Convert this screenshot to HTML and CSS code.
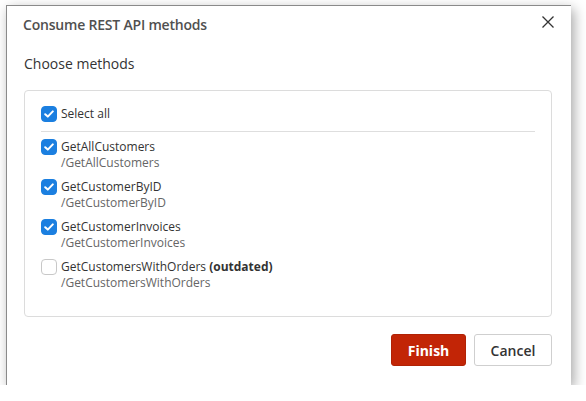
FILE: index.html
```html
<!DOCTYPE html>
<html>
<head>
<meta charset="utf-8">
<link rel="stylesheet" href="styles.css">
</head>
<body>
<div class="dialog">
  <div class="header">
    <h1 class="title">Consume REST API methods</h1>
    <button class="close" aria-label="Close">
      <svg width="12" height="12" viewBox="0 0 12 12"><path d="M0.5 0.5 L11.5 11.5 M11.5 0.5 L0.5 11.5" stroke="#333" stroke-width="1.3" fill="none"/></svg>
    </button>
  </div>
  <div class="body">
    <div class="subtitle">Choose methods</div>
    <div class="box">
      <label class="row all">
        <span class="cb checked"><svg width="10" height="8" viewBox="0 0 10 8"><path d="M1.2 4.2 L3.8 6.6 L8.8 1.4" stroke="#fff" stroke-width="2" fill="none" stroke-linecap="round" stroke-linejoin="round"/></svg></span>
        <span class="name">Select all</span>
      </label>
      <div class="divider"></div>
      <label class="row">
        <span class="cb checked"><svg width="10" height="8" viewBox="0 0 10 8"><path d="M1.2 4.2 L3.8 6.6 L8.8 1.4" stroke="#fff" stroke-width="2" fill="none" stroke-linecap="round" stroke-linejoin="round"/></svg></span>
        <span class="text"><span class="name">GetAllCustomers</span><span class="path">/GetAllCustomers</span></span>
      </label>
      <label class="row">
        <span class="cb checked"><svg width="10" height="8" viewBox="0 0 10 8"><path d="M1.2 4.2 L3.8 6.6 L8.8 1.4" stroke="#fff" stroke-width="2" fill="none" stroke-linecap="round" stroke-linejoin="round"/></svg></span>
        <span class="text"><span class="name">GetCustomerByID</span><span class="path">/GetCustomerByID</span></span>
      </label>
      <label class="row">
        <span class="cb checked"><svg width="10" height="8" viewBox="0 0 10 8"><path d="M1.2 4.2 L3.8 6.6 L8.8 1.4" stroke="#fff" stroke-width="2" fill="none" stroke-linecap="round" stroke-linejoin="round"/></svg></span>
        <span class="text"><span class="name">GetCustomerInvoices</span><span class="path">/GetCustomerInvoices</span></span>
      </label>
      <label class="row">
        <span class="cb"></span>
        <span class="text"><span class="name">GetCustomersWithOrders <b>(outdated)</b></span><span class="path">/GetCustomersWithOrders</span></span>
      </label>
    </div>
  </div>
  <div class="footer">
    <button class="btn primary">Finish</button>
    <button class="btn secondary">Cancel</button>
  </div>
</div>
</body>
</html>
```
FILE: styles.css
```css
* { box-sizing: border-box; }
html, body { margin: 0; padding: 0; background: #fff; }
body {
  font-family: "Open Sans", "Noto Sans", sans-serif;
  color: #333;
  padding: 5px 0 0 6px;
}
.dialog {
  width: 565px;
  height: 380px;
  background: #fff;
  border-top: 1px solid #8a8a8a;
  border-left: 1px solid #8a8a8a;
  box-shadow: 3px 4px 12px rgba(0,0,0,0.35);
  display: flex;
  flex-direction: column;
}
.header {
  display: flex;
  align-items: center;
  justify-content: space-between;
  padding: 1px 17px 0 16px;
  height: 36px;
}
.title {
  margin: 0;
  font-size: 14px;
  font-weight: 600;
  color: #505050;
  letter-spacing: -0.2px;
}
.close {
  background: none;
  border: 0;
  padding: 0;
  width: 12px;
  height: 12px;
  display: flex;
  align-self: flex-start;
  margin-top: 9px;
}
.body {
  padding: 0 19px 0 17px;
  flex: 1;
}
.subtitle {
  font-size: 14px;
  line-height: 19px;
  color: #333;
  margin-top: 12px;
  height: 19px;
}
.box {
  margin-top: 17px;
  border: 1px solid #dcdcdc;
  border-radius: 4px;
  height: 227px;
  padding: 15px 16px 0 16px;
}
.row {
  display: flex;
  align-items: flex-start;
  gap: 4px;
  font-size: 12px;
  line-height: 16px;
  margin-bottom: 8px;
}
.row.all { margin-bottom: 0; align-items: center; }
.divider {
  height: 1px;
  background: #dedede;
  margin: 9px 0 7px 0;
}
.cb {
  flex: none;
  width: 16px;
  height: 16px;
  border-radius: 4px;
  border: 1px solid #c8c8c8;
  background: #fff;
  display: flex;
  align-items: center;
  justify-content: center;
}
.cb.checked {
  background: #1b7fe0;
  border-color: #1b7fe0;
}
.text { display: flex; flex-direction: column; }
.name { color: #333; }
.name b { font-weight: 700; }
.path { color: #666; }
.footer {
  display: flex;
  justify-content: flex-end;
  gap: 8px;
  padding: 0 19px 19px 0;
}
.btn {
  font-family: "Open Sans", "Noto Sans", sans-serif;
  font-size: 14px;
  height: 32px;
  border-radius: 3px;
  padding: 0;
}
.btn.primary {
  width: 75px;
  background: #c22506;
  border: 1px solid #b02205;
  color: #fff;
  font-weight: 700;
}
.btn.secondary {
  width: 78px;
  background: #fff;
  border: 1px solid #cfcfcf;
  color: #333;
  font-weight: 600;
}
```
